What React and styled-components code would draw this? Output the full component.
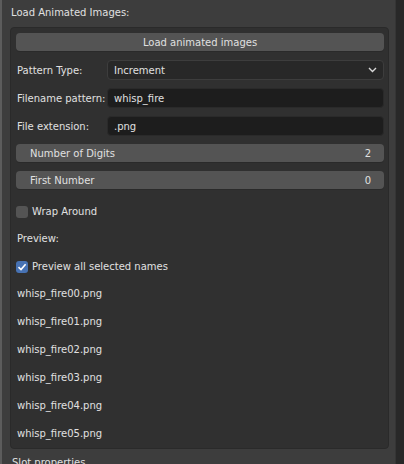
import React from "react";
import styled, { createGlobalStyle } from "styled-components";

const GlobalStyle = createGlobalStyle`
    html, body {
        margin: 0;
        padding: 0;
        background: #282828;
    }
    body {
        font-family: "DejaVu Sans", sans-serif;
        font-size: 10px;
        color: #e0e0e0;
        white-space: nowrap;
    }
`;

const Frame = styled.div`
    display: flex;
    width: 404px;
    height: 464px;
    overflow: hidden;
    background: #282828;
`;

const Edge = styled.div`
    width: 2px;
    background: #5c5c5c;
`;

const Panel = styled.div`
    width: 394px;
    background: #3d3d3d;
    border-right: 1px solid #353535;
    padding: 5px 0 0 8px;
    box-sizing: border-box;
`;

const Heading = styled.div`
    height: 16px;
    line-height: 16px;
    padding-left: 1px;
    margin-bottom: 6px;
`;

const Box = styled.div`
    width: 379px;
    height: 422px;
    box-sizing: border-box;
    background: #303030;
    border: 1px solid #2a2a2a;
    border-radius: 4px;
    padding: 5px 4px 0 5px;
    display: flex;
    flex-direction: column;
`;

const Button = styled.div`
    height: 19px;
    border-radius: 4px;
    background: #545454;
    box-shadow: 0 1px 0 #2a2a2a;
    display: flex;
    align-items: center;
    justify-content: center;
    margin-bottom: 9px;
`;

const Row = styled.div`
    display: flex;
    align-items: center;
    height: 20px;
    margin-bottom: 8px;
`;

const Label = styled.div`
    width: 90px;
    flex: none;
    padding-left: 1px;
`;

const Field = styled.div`
    flex: 1;
    height: 20px;
    box-sizing: border-box;
    border-radius: 4px;
    border: 1px solid ${(p) => (p.$menu ? "#3d3d3d" : "#2a2a2a")};
    background: ${(p) => (p.$menu ? "#282828" : "#1d1d1d")};
    display: flex;
    align-items: center;
    justify-content: space-between;
    padding: 0 6px 0 6px;
`;

const Slider = styled.div`
    height: 19px;
    border-radius: 4px;
    background: #545454;
    box-shadow: 0 1px 0 #2a2a2a;
    display: flex;
    align-items: center;
    justify-content: space-between;
    padding: 0 13px 0 14px;
    margin-bottom: 9px;
`;

const Check = styled.div`
    display: flex;
    align-items: center;
    gap: 4px;
    height: 28px;
`;

const CheckBox = styled.span`
    width: 12px;
    height: 12px;
    border-radius: 3px;
    background: ${(p) => (p.$on ? "#4772b3" : "#545454")};
    display: flex;
    align-items: center;
    justify-content: center;
`;

const Line = styled.div`
    height: 28px;
    line-height: 28px;
    padding-left: 1px;
`;

const Footer = styled.div`
    margin-top: 6px;
    padding-left: 2px;
    line-height: 16px;
`;

const names = [0, 1, 2, 3, 4, 5].map((n) => `whisp_fire0${n}.png`);

const App = () => {
    return (
        <>
            <GlobalStyle />
            <Frame>
                <Edge />
                <Panel>
                    <Heading>Load Animated Images:</Heading>
                    <Box>
                        <Button>Load animated images</Button>
                        <Row>
                            <Label>Pattern Type:</Label>
                            <Field $menu>
                                <span>Increment</span>
                                <svg width="9" height="6" viewBox="0 0 9 6">
                                    <path d="M1 1 L4.5 4.5 L8 1" fill="none" stroke="#d8d8d8" strokeWidth="1.4" />
                                </svg>
                            </Field>
                        </Row>
                        <Row>
                            <Label>Filename pattern:</Label>
                            <Field>whisp_fire</Field>
                        </Row>
                        <Row>
                            <Label>File extension:</Label>
                            <Field>.png</Field>
                        </Row>
                        <Slider>
                            <span>Number of Digits</span>
                            <span>2</span>
                        </Slider>
                        <Slider>
                            <span>First Number</span>
                            <span>0</span>
                        </Slider>
                        <Check>
                            <CheckBox />
                            <span>Wrap Around</span>
                        </Check>
                        <Line>Preview:</Line>
                        <Check>
                            <CheckBox $on>
                                <svg width="10" height="10" viewBox="0 0 10 10">
                                    <path d="M1.5 5.2 L4 7.6 L8.6 2.2" fill="none" stroke="#fff" strokeWidth="1.6" />
                                </svg>
                            </CheckBox>
                            <span>Preview all selected names</span>
                        </Check>
                        {names.map((n) => (
                            <Line key={n}>{n}</Line>
                        ))}
                    </Box>
                    <Footer>Slot properties</Footer>
                </Panel>
            </Frame>
        </>
    );
};

export default App;
